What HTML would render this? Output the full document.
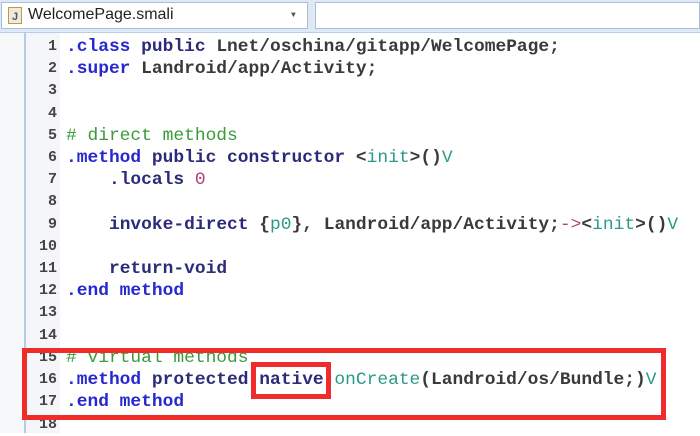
<!DOCTYPE html>
<html><head><meta charset="utf-8"><style>
body{margin:0;width:700px;height:433px;overflow:hidden;background:#fff;position:relative;font-family:"Liberation Mono",monospace}
.hdr{position:absolute;left:0;top:0;width:700px;height:32px;background:#dfe9f5;border-bottom:1px solid #b9cde6}
.cb{position:absolute;top:2px;height:27px;background:#fff;border:1px solid #a9bfd9;box-sizing:border-box}
.gut{position:absolute;left:0;top:33px;width:24px;height:400px;background:#f7f8fa;border-right:2px solid #b8cbe6}
.nums{position:absolute;left:26px;top:33px;width:34px;height:400px;background:#f4f6f9}
.line{position:absolute;left:0;height:22px;line-height:22px;font-size:17.9px;font-weight:bold;white-space:pre;color:#3a3a3a}
.n{position:absolute;left:26px;width:31px;text-align:right;color:#444;font-size:15px}
.c{position:absolute;left:66px}
.k{color:#2828d0}.p{color:#2b2b7a}.g{color:#3a9a3a;font-weight:normal}.t{color:#2a9a8a;font-weight:normal}.m{color:#b0407a;font-weight:normal}
.r{position:absolute;border:5px solid #ef2b2b;box-sizing:border-box}
</style></head><body>
<div class="hdr">
 <div class="cb" style="left:1px;width:307px">
  <svg style="position:absolute;left:6px;top:4px" width="14" height="17"><rect x="0.5" y="0.5" width="13" height="16" fill="#f4ead0" stroke="#b59a5a"/><text x="4" y="13" font-size="11" font-family="Liberation Sans" fill="#3a5a9a" font-weight="bold">J</text></svg>
  <span style="position:absolute;left:26px;top:3px;font:16px 'Liberation Sans',sans-serif;color:#222">WelcomePage.smali</span>
  <span style="position:absolute;left:289px;top:8px;font-size:8px;color:#555">▼</span>
 </div>
 <div class="cb" style="left:315px;width:385px"></div>
</div>
<div class="gut"></div><div class="nums"></div>
<div class="line" style="top:36px"><span class="n">1</span><span class="c"><span class="k">.class </span><span class="p">public </span>Lnet/oschina/gitapp/WelcomePage;</span></div>
<div class="line" style="top:58px"><span class="n">2</span><span class="c"><span class="k">.super </span>Landroid/app/Activity;</span></div>
<div class="line" style="top:80px"><span class="n">3</span></div>
<div class="line" style="top:103px"><span class="n">4</span></div>
<div class="line" style="top:125px"><span class="n">5</span><span class="c"><span class="g"># direct methods</span></span></div>
<div class="line" style="top:147px"><span class="n">6</span><span class="c"><span class="k">.method </span><span class="p">public constructor </span>&lt;<span class="t">init</span>&gt;()<span class="t">V</span></span></div>
<div class="line" style="top:169px"><span class="n">7</span><span class="c">    <span class="p">.locals </span><span class="m">0</span></span></div>
<div class="line" style="top:191px"><span class="n">8</span></div>
<div class="line" style="top:214px"><span class="n">9</span><span class="c">    <span class="p">invoke-direct </span>{<span class="t">p0</span>}, Landroid/app/Activity;<span class="m">-&gt;</span>&lt;<span class="t">init</span>&gt;()<span class="t">V</span></span></div>
<div class="line" style="top:236px"><span class="n">10</span></div>
<div class="line" style="top:258px"><span class="n">11</span><span class="c">    <span class="p">return-void</span></span></div>
<div class="line" style="top:280px"><span class="n">12</span><span class="c"><span class="k">.end method</span></span></div>
<div class="line" style="top:302px"><span class="n">13</span></div>
<div class="line" style="top:325px"><span class="n">14</span></div>
<div class="line" style="top:347px"><span class="n">15</span><span class="c"><span class="g"># virtual methods</span></span></div>
<div class="line" style="top:369px"><span class="n">16</span><span class="c"><span class="k">.method </span><span class="p">protected native </span><span class="t">onCreate</span>(Landroid/os/Bundle;)<span class="t">V</span></span></div>
<div class="line" style="top:391px"><span class="n">17</span><span class="c"><span class="k">.end method</span></span></div>
<div class="line" style="top:414px"><span class="n">18</span></div>
<div class="r" style="left:22px;top:348px;width:644px;height:72px"></div>
<div class="r" style="left:251px;top:362px;width:80px;height:37px"></div>
</body></html>
